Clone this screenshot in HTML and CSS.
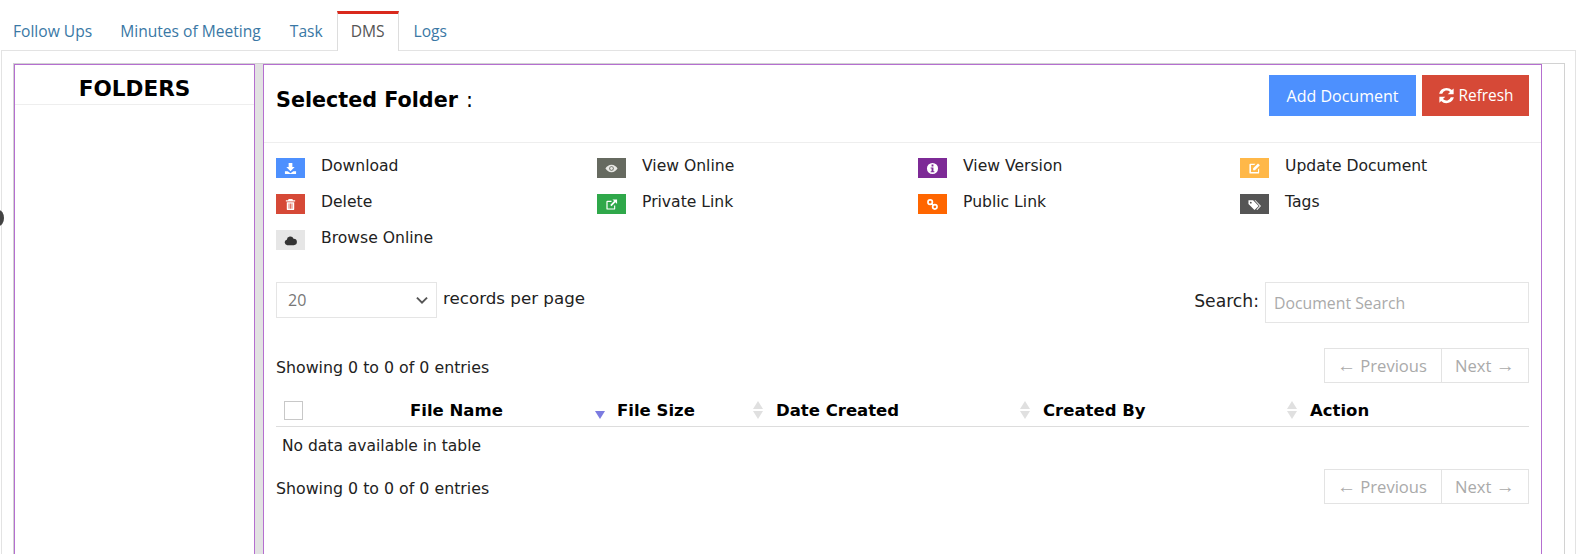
FILE: index.html
```html
<!DOCTYPE html>
<html lang="en">
<head>
<meta charset="utf-8">
<title>DMS</title>
<link rel="stylesheet" href="styles.css">
</head>
<body>
<span class="handle"></span>
<ul class="tabs">
  <li class="tab">Follow Ups</li>
  <li class="tab">Minutes of Meeting</li>
  <li class="tab">Task</li>
  <li class="tab active">DMS</li>
  <li class="tab">Logs</li>
</ul>
<div class="tab-body">
  <div class="inner">
    <aside class="folders">
      <h2 class="folders-title">FOLDERS</h2>
    </aside>
    <div class="splitter"></div>
    <section class="main">
      <header class="main-head">
        <h1 class="selected">Selected Folder <span class="colon">:</span></h1>
        <div class="actions">
          <button class="btn btn-add">Add Document</button>
          <button class="btn btn-refresh">
            <svg class="refresh-icon" viewBox="0 0 16 16"><path d="M8 1.6a6.4 6.4 0 0 1 4.5 1.8L14 2v5H9l2-2a3.9 3.9 0 0 0-6.6 1.6H1.8A6.4 6.4 0 0 1 8 1.6zM2 9h5l-2 2a3.9 3.9 0 0 0 6.6-1.6h2.600A6.4 6.4 0 0 1 3.500 12.600L2 14z" fill="#fff"/></svg>Refresh
          </button>
        </div>
      </header>
      <div class="legend">
        <div class="legend-item"><span class="chip c-blue"><svg viewBox="0 0 14 14"><path d="M5 1h4v4.500h2.500L7 10 2.500 5.500H5zM1 10h3l3 2 3-2h3v3H1z" fill="#fff"/></svg></span>Download</div>
        <div class="legend-item"><span class="chip c-gray"><svg viewBox="0 0 14 14"><path fill-rule="evenodd" d="M7 3c3 0 5.300 2 6.500 4C12.300 9 10 11 7 11S1.700 9 .5 7C1.700 5 4 3 7 3zm0 1.500A2.500 2.500 0 1 0 7 9.500 2.500 2.500 0 0 0 7 4.500z" fill="#e8e8e4"/><circle cx="7" cy="7" r="1.500" fill="#e8e8e4"/></svg></span>View Online</div>
        <div class="legend-item"><span class="chip c-purple"><svg viewBox="0 0 14 14"><path fill-rule="evenodd" d="M7 1a6 6 0 1 1 0 12A6 6 0 0 1 7 1zM6 2.800v2h2v-2zM5 6v1h1v3H5v1h4v-1H8V6z" fill="#fff"/></svg></span>View Version</div>
        <div class="legend-item"><span class="chip c-amber"><svg viewBox="0 0 14 14"><path d="M2.500 2H8L6.800 3.200H3.200v7.600h7.600V8L12 6.800v4.700a1 1 0 0 1-1 1H2.500a1 1 0 0 1-1-1v-8.500a1 1 0 0 1 1-1z" fill="#fff"/><path d="M5.500 6.800 10.800 1.500 12.800 3.500 7.500 8.800H5.500z" fill="#fff"/></svg></span>Update Document</div>
        <div class="legend-item"><span class="chip c-red"><svg viewBox="0 0 14 14"><path fill-rule="evenodd" d="M5 1h4l.7 1.500H12v1.200H2V2.500h2.300zM3 4.500h8V12a1 1 0 0 1-1 1H4a1 1 0 0 1-1-1zM5 6v5.500h.8V6zm1.600 0v5.500h.8V6zm1.600 0v5.500H9V6z" fill="#fff"/></svg></span>Delete</div>
        <div class="legend-item"><span class="chip c-green"><svg viewBox="0 0 14 14"><path d="M2.500 3H7v1.200H2.800v7h7V8H11v3.500a1 1 0 0 1-1 1H2.500a1 1 0 0 1-1-1V4a1 1 0 0 1 1-1z" fill="#fff"/><path d="M8 1.500h5v5l-1.800-1.800-4.200 4.200-1.400-1.400 4.200-4.200z" fill="#fff"/></svg></span>Private Link</div>
        <div class="legend-item"><span class="chip c-orange"><svg viewBox="0 0 14 14"><g fill="none" stroke="#fff" stroke-width="1.800"><circle cx="4.500" cy="4.500" r="2.400"/><circle cx="9.500" cy="9.500" r="2.400"/><path d="M5.500 5.500l3 3"/></g></svg></span>Public Link</div>
        <div class="legend-item"><span class="chip c-dark"><svg viewBox="0 0 14 14"><path fill-rule="evenodd" d="M.5 2.500h5l6 6-4.500 4.500-6.500-6.500zM3 4a1 1 0 1 0 0 2 1 1 0 0 0 0-2z" fill="#fff"/><path d="M7 2.500h1l6 6-4 4.500-.9-.5 3.500-4z" fill="#fff"/></svg></span>Tags</div>
        <div class="legend-item"><span class="chip c-light"><svg viewBox="0 0 14 14"><path d="M3.500 12A3 3 0 0 1 3 6.100 3.800 3.800 0 0 1 10.300 5a3.500 3.500 0 0 1 .2 7z" fill="#333"/></svg></span>Browse Online</div>
      </div>
      <div class="controls">
        <label class="length">
          <span class="select"><span>20</span><svg class="chev" viewBox="0 0 12 8"><path d="M1.500 1.500 6 6l4.500-4.500" fill="none" stroke="#555" stroke-width="1.700"/></svg></span>
          <span class="length-text">records per page</span>
        </label>
        <label class="search">Search:<input class="search-input" type="text" placeholder="Document Search"></label>
      </div>
      <div class="info-row info-top">
        <span class="info">Showing 0 to 0 of 0 entries</span>
        <div class="pager"><span class="page"><span class="arrow">←</span>&nbsp;Previous</span><span class="page">Next&nbsp;<span class="arrow">→</span></span></div>
      </div>
      <table class="grid">
        <colgroup><col class="col-check"><col class="col-name"><col class="col-size"><col class="col-date"><col class="col-by"><col></colgroup>
        <thead>
          <tr>
            <th><span class="checkbox"></span></th>
            <th class="sorted">File Name<span class="sort-down"></span></th>
            <th class="sortable">File Size</th>
            <th class="sortable">Date Created</th>
            <th class="sortable">Created By</th>
            <th>Action</th>
          </tr>
        </thead>
        <tbody>
          <tr><td colspan="6">No data available in table</td></tr>
        </tbody>
      </table>
      <div class="info-row info-bottom">
        <span class="info">Showing 0 to 0 of 0 entries</span>
        <div class="pager"><span class="page"><span class="arrow">←</span>&nbsp;Previous</span><span class="page">Next&nbsp;<span class="arrow">→</span></span></div>
      </div>
    </section>
  </div>
</div>
</body>
</html>
```

FILE: styles.css
```css
* { box-sizing: border-box; }
html, body { margin: 0; height: 554px; overflow: hidden; background: #fff; }
body { font-family: "DejaVu Sans", sans-serif; font-size: 15.6px; color: #222; display: flex; flex-direction: column; padding-top: 11px; position: relative; }

.handle { position: absolute; left: -7px; top: 210px; width: 11px; height: 16px; border-radius: 50%; background: #444; z-index: 2; }

.tabs { list-style: none; margin: 0; padding: 0; display: flex; height: 39px; font-family: "Open Sans", sans-serif; font-size: 15.6px; position: relative; z-index: 1; }
.tab { padding: 0 14px; height: 40px; line-height: 35px; color: #3a78a5; border-top: 3px solid transparent; }
.tab:first-child { padding-left: 13px; }
.tab:nth-child(2) { padding-right: 15px; }
.tab.active { color: #555; background: #fff; border-top: 3px solid #d9291c; border-left: 1px solid #ddd; border-right: 1px solid #ddd; padding: 0 13px; }
.tab:last-child { padding-left: 15px; }

.tab-body { flex: 1; min-height: 0; margin: 0 9px 0 1px; border: 1px solid #e3e3e3; border-bottom: 0; padding: 12px 10px 0 11px; display: flex; }
.inner { flex: 1; min-width: 0; display: flex; border: 1px solid #d2d2d2; border-bottom: 0; padding-right: 22px; }

.folders { width: 241px; border: 1px solid #b56fd0; border-bottom: 0; flex: none; }
.folders-title { margin: 0; height: 40px; line-height: 47px; font-size: 21.6px; font-weight: 700; color: #000; text-align: center; border-bottom: 1px solid #eee; }
.splitter { width: 8px; flex: none; background: #e2e2e2; }
.main { flex: 1; min-width: 0; border: 1px solid #b56fd0; border-bottom: 0; padding: 0 12px; }

.main-head { height: 78px; margin: 0 -12px; padding: 10px 12px 0; border-bottom: 1px solid #eee; display: flex; justify-content: space-between; }
.selected { margin: 0; padding-top: 13px; font-size: 20.7px; line-height: 24px; font-weight: 700; color: #000; }
.colon { font-weight: 400; margin-left: 1px; }
.actions { display: flex; gap: 6px; height: 41px; }
.btn { border: 0; color: #fff; font-family: "Open Sans", sans-serif; font-size: 16px; height: 41px; padding: 0; display: flex; align-items: center; justify-content: center; }
.btn-add { width: 147px; background: #4d90fe; }
.btn-refresh { width: 107px; background: #d64937; gap: 2px; font-size: 15.4px; }
.refresh-icon { width: 19px; height: 19px; }

.legend { display: grid; grid-template-columns: 321px 321px 322px 1fr; grid-auto-rows: 36px; padding-top: 15px; }
.legend-item { display: flex; align-items: flex-start; line-height: 16px; height: 20px; }
.chip { width: 29px; height: 20px; margin-right: 16px; flex: none; display: flex; align-items: center; justify-content: center; }
.chip svg { width: 13px; height: 13px; }
.c-blue { background: #4d90fe; }
.c-gray { background: #666a60; }
.c-purple { background: #7d2a96; }
.c-amber { background: #ffb848; }
.c-red { background: #d64937; }
.c-green { background: #2fa84a; }
.c-orange { background: #ff6600; }
.c-dark { background: #555; }
.c-light { background: #e6e6e6; }

.controls { display: flex; justify-content: space-between; margin-top: 16px; height: 40px; }
.length { display: flex; align-items: flex-start; }
.select { width: 161px; height: 36px; border: 1px solid #e5e5e5; padding: 0 7px 0 11px; display: flex; align-items: center; justify-content: space-between; color: #777; font-family: "Open Sans", sans-serif; font-size: 16px; }
.chev { width: 14px; height: 9px; }
.length-text { margin-left: 6px; line-height: 32px; font-size: 16.7px; }
.search { display: flex; align-items: flex-start; line-height: 38px; font-size: 17.2px; }
.search-input { width: 264px; height: 41px; margin-left: 6px; border: 1px solid #e5e5e5; padding: 0 8px; font-family: "Open Sans", sans-serif; font-size: 15.8px; outline: 0; }
.search-input::placeholder { color: #aaa; }

.info-row { display: flex; justify-content: space-between; align-items: flex-start; }
.info-top { margin-top: 26px; height: 47px; }
.info-bottom { margin-top: 3px; }
.info { line-height: 40px; font-size: 15.8px; }
.pager { display: flex; height: 35px; border: 1px solid #e3e3e3; font-family: "Open Sans", sans-serif; font-size: 16.6px; color: #aaa; width: 205px; }
.page { display: flex; align-items: center; padding: 0 13px; white-space: nowrap; }
.page:first-child { width: 117px; padding-left: 12px; border-right: 1px solid #e3e3e3; }
.arrow { font-family: "Liberation Sans", sans-serif; font-size: 19px; line-height: 1; }

.grid { width: 100%; border-collapse: collapse; table-layout: fixed; }
.col-check { width: 126px; }
.col-name { width: 207px; }
.col-size { width: 159px; }
.col-date { width: 267px; }
.col-by { width: 267px; }
.grid th { position: relative; height: 31px; padding: 0 8px; text-align: left; font-size: 16.5px; font-weight: 700; color: #000; border-bottom: 1px solid #ddd; }
.grid td { height: 40px; padding: 0 6px; font-size: 15.5px; }
.checkbox { display: block; width: 19px; height: 19px; border: 1px solid #c8c8c8; margin-top: 1px; }
.sort-down { position: absolute; right: 4px; top: 16px; width: 0; height: 0; border-left: 5px solid transparent; border-right: 5px solid transparent; border-top: 8px solid #7b7be0; }
.sortable::after, .sortable::before { content: ""; position: absolute; right: 5px; width: 0; height: 0; border-left: 5px solid transparent; border-right: 5px solid transparent; }
.sortable::before { top: 6px; border-bottom: 8px solid #e0e0e0; }
.sortable::after { top: 16px; border-top: 8px solid #e0e0e0; }
```
